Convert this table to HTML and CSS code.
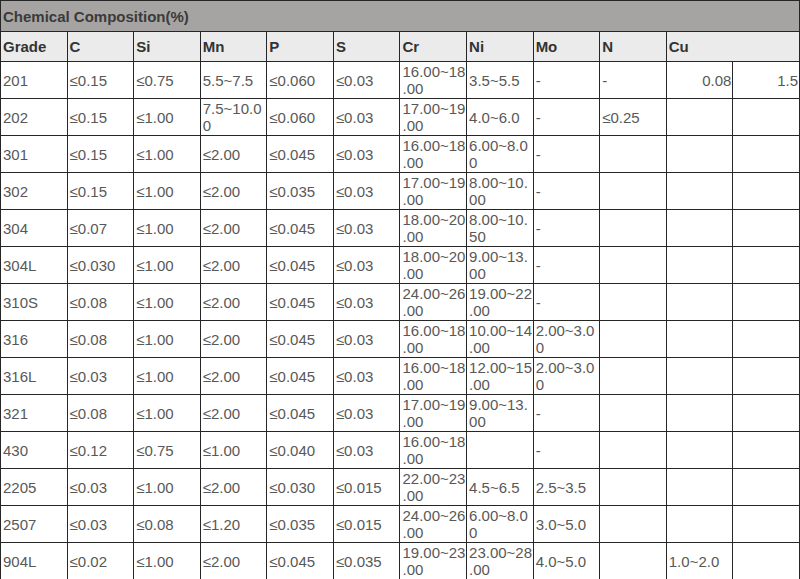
FILE: index.html
```html
<!DOCTYPE html>
<html>
<head>
<meta charset="utf-8">
<link rel="stylesheet" href="styles.css">
</head>
<body>
<table class="comp">
  <colgroup>
    <col><col><col><col><col><col><col><col><col><col><col><col>
  </colgroup>
  <tr class="title-row"><th colspan="12">Chemical Composition(%)</th></tr>
  <tr class="head-row">
    <th>Grade</th><th>C</th><th>Si</th><th>Mn</th><th>P</th><th>S</th><th>Cr</th><th>Ni</th><th>Mo</th><th>N</th><th colspan="2">Cu</th>
  </tr>
  <tr><td>201</td><td>≤0.15</td><td>≤0.75</td><td>5.5~7.5</td><td>≤0.060</td><td>≤0.03</td><td>16.00~18<br>.00</td><td>3.5~5.5</td><td>-</td><td>-</td><td class="num">0.08</td><td class="num">1.5</td></tr>
  <tr><td>202</td><td>≤0.15</td><td>≤1.00</td><td>7.5~10.0<br>0</td><td>≤0.060</td><td>≤0.03</td><td>17.00~19<br>.00</td><td>4.0~6.0</td><td>-</td><td>≤0.25</td><td></td><td></td></tr>
  <tr><td>301</td><td>≤0.15</td><td>≤1.00</td><td>≤2.00</td><td>≤0.045</td><td>≤0.03</td><td>16.00~18<br>.00</td><td>6.00~8.0<br>0</td><td>-</td><td></td><td></td><td></td></tr>
  <tr><td>302</td><td>≤0.15</td><td>≤1.00</td><td>≤2.00</td><td>≤0.035</td><td>≤0.03</td><td>17.00~19<br>.00</td><td>8.00~10.<br>00</td><td>-</td><td></td><td></td><td></td></tr>
  <tr><td>304</td><td>≤0.07</td><td>≤1.00</td><td>≤2.00</td><td>≤0.045</td><td>≤0.03</td><td>18.00~20<br>.00</td><td>8.00~10.<br>50</td><td>-</td><td></td><td></td><td></td></tr>
  <tr><td>304L</td><td>≤0.030</td><td>≤1.00</td><td>≤2.00</td><td>≤0.045</td><td>≤0.03</td><td>18.00~20<br>.00</td><td>9.00~13.<br>00</td><td>-</td><td></td><td></td><td></td></tr>
  <tr><td>310S</td><td>≤0.08</td><td>≤1.00</td><td>≤2.00</td><td>≤0.045</td><td>≤0.03</td><td>24.00~26<br>.00</td><td>19.00~22<br>.00</td><td>-</td><td></td><td></td><td></td></tr>
  <tr><td>316</td><td>≤0.08</td><td>≤1.00</td><td>≤2.00</td><td>≤0.045</td><td>≤0.03</td><td>16.00~18<br>.00</td><td>10.00~14<br>.00</td><td>2.00~3.0<br>0</td><td></td><td></td><td></td></tr>
  <tr><td>316L</td><td>≤0.03</td><td>≤1.00</td><td>≤2.00</td><td>≤0.045</td><td>≤0.03</td><td>16.00~18<br>.00</td><td>12.00~15<br>.00</td><td>2.00~3.0<br>0</td><td></td><td></td><td></td></tr>
  <tr><td>321</td><td>≤0.08</td><td>≤1.00</td><td>≤2.00</td><td>≤0.045</td><td>≤0.03</td><td>17.00~19<br>.00</td><td>9.00~13.<br>00</td><td>-</td><td></td><td></td><td></td></tr>
  <tr><td>430</td><td>≤0.12</td><td>≤0.75</td><td>≤1.00</td><td>≤0.040</td><td>≤0.03</td><td>16.00~18<br>.00</td><td></td><td>-</td><td></td><td></td><td></td></tr>
  <tr><td>2205</td><td>≤0.03</td><td>≤1.00</td><td>≤2.00</td><td>≤0.030</td><td>≤0.015</td><td>22.00~23<br>.00</td><td>4.5~6.5</td><td>2.5~3.5</td><td></td><td></td><td></td></tr>
  <tr><td>2507</td><td>≤0.03</td><td>≤0.08</td><td>≤1.20</td><td>≤0.035</td><td>≤0.015</td><td>24.00~26<br>.00</td><td>6.00~8.0<br>0</td><td>3.0~5.0</td><td></td><td></td><td></td></tr>
  <tr><td>904L</td><td>≤0.02</td><td>≤1.00</td><td>≤2.00</td><td>≤0.045</td><td>≤0.035</td><td>19.00~23<br>.00</td><td>23.00~28<br>.00</td><td>4.0~5.0</td><td></td><td>1.0~2.0</td><td></td></tr>
</table>
</body>
</html>
```

FILE: styles.css
```css
html, body {
  margin: 0;
  padding: 0;
  background: #ffffff;
}

.comp {
  width: 800px;
  border-collapse: collapse;
  table-layout: fixed;
  font-family: "Liberation Sans", Arial, sans-serif;
  font-size: 15px;
  line-height: 17px;
  color: #585858;
}

.comp th,
.comp td {
  border: 1px solid #262626;
  padding: 0 0 0 2px;
  text-align: left;
  vertical-align: middle;
  white-space: nowrap;
  overflow: hidden;
}

.comp tr {
  height: 37px;
}

.comp .title-row {
  height: 31px;
}

.comp .title-row th {
  background: #a6a4a2;
  color: #3a3a3a;
  font-weight: bold;
}

.comp .head-row {
  height: 30px;
}

.comp .head-row th {
  background: #ebebeb;
  color: #333333;
  font-weight: bold;
}

.comp td.num {
  text-align: right;
  padding: 0 1px 0 0;
}
```
